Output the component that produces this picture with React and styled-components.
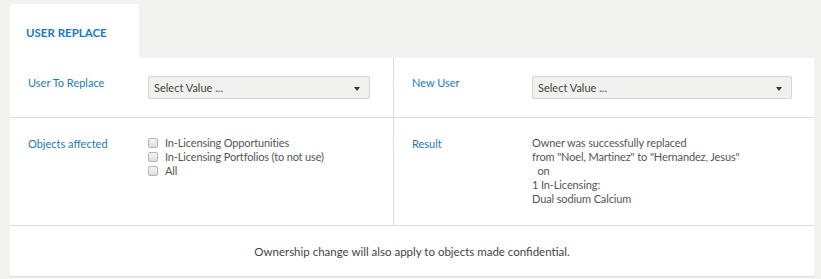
import React from "react";
import styled, { createGlobalStyle } from "styled-components";

const Global = createGlobalStyle`
  html, body { margin: 0; padding: 0; background: #f2f2f0; }
  body { font-family: Lato, "Open Sans", sans-serif; font-size: 11px; color: #555; }
`;

const Page = styled.div`
  padding: 4px 7px 0 10px;
  width: 804px;
`;

const Tab = styled.div`
  width: 113px;
  height: 32px;
  padding: 22px 0 0 16px;
  background: #fff;
  border-radius: 3px 3px 0 0;
  color: #1c78c0;
  font-weight: 700;
  font-size: 11.5px;
  line-height: 14px;
`;

const Panel = styled.div`
  background: #fff;
  border-bottom: 1px solid #dcdcdc;
`;

const Row = styled.div`
  display: grid;
  grid-template-columns: 383px 1fr;
  border-bottom: 1px solid #dcdcdc;
`;

const Cell = styled.div`
  display: grid;
  grid-template-columns: 120px 1fr;
  align-items: start;
  padding: ${(p) => p.$pad};
  border-left: ${(p) => (p.$divider ? "1px solid #dcdcdc" : "none")};
  line-height: 14px;
`;

const Label = styled.div`
  color: #2479b9;
  font-size: 11px;
  line-height: 14px;
  padding-top: ${(p) => p.$top || 0}px;
`;

const Select = styled.div`
  position: relative;
  height: 21px;
  border: 1px solid #d4d4d2;
  border-radius: 2px;
  background: #f0f0ee;
  display: flex;
  align-items: center;
  padding-left: 5px;
  color: #444;
  font-size: 11px;
`;

const Arrow = styled.span`
  position: absolute;
  right: 9px;
  top: 10px;
  width: 0;
  height: 0;
  border-left: 3.5px solid transparent;
  border-right: 3.5px solid transparent;
  border-top: 4px solid #333;
`;

const CheckList = styled.div`
  display: flex;
  flex-direction: column;
`;

const CheckRow = styled.label`
  display: flex;
  align-items: center;
  height: 14px;
  gap: 7px;
  color: #555;
  font-size: 11px;
  letter-spacing: -0.15px;
`;

const Box = styled.span`
  width: 8px;
  height: 8px;
  border: 1px solid #b4b4b4;
  border-radius: 2px;
  background: linear-gradient(#f4f4f4, #dedede);
  flex: none;
`;

const ResultText = styled.div`
  color: #555;
  font-size: 11px;
  line-height: 14px;
  letter-spacing: -0.12px;
  white-space: pre;
`;

const Footer = styled.div`
  height: 50px;
  display: flex;
  align-items: center;
  justify-content: center;
  color: #444;
  font-size: 11.5px;
`;

const SelectBox = () => (
  <Select>
    Select Value ...
    <Arrow />
  </Select>
);

export default function App() {
  return (
    <>
      <Global />
      <Page>
        <Tab>USER REPLACE</Tab>
        <Panel>
          <Row>
            <Cell $pad="18px 23px 18px 18px">
              <Label>User To Replace</Label>
              <SelectBox />
            </Cell>
            <Cell $divider $pad="18px 22px 18px 18px">
              <Label>New User</Label>
              <SelectBox />
            </Cell>
          </Row>
          <Row>
            <Cell $pad="18px 23px 19px 18px">
              <Label $top={1}>Objects affected</Label>
              <CheckList>
                <CheckRow><Box />In-Licensing Opportunities</CheckRow>
                <CheckRow><Box />In-Licensing Portfolios (to not use)</CheckRow>
                <CheckRow><Box />All</CheckRow>
              </CheckList>
            </Cell>
            <Cell $divider $pad="18px 22px 19px 18px">
              <Label $top={1}>Result</Label>
              <ResultText>
                {'Owner was successfully replaced\nfrom "Noel, Martinez" to "Hernandez, Jesus"\n  on\n1 In-Licensing:\nDual sodium Calcium'}
              </ResultText>
            </Cell>
          </Row>
          <Footer>Ownership change will also apply to objects made confidential.</Footer>
        </Panel>
      </Page>
    </>
  );
}
